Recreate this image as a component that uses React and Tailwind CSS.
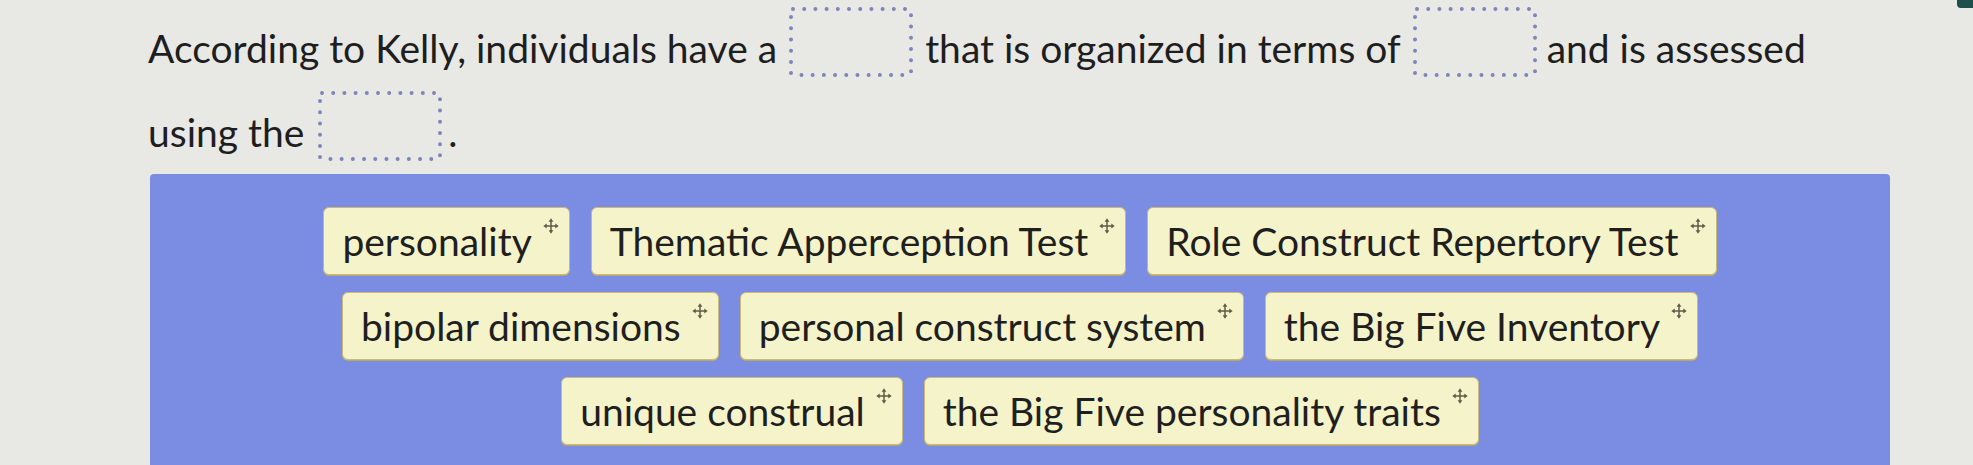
import React from 'react';

const rows = [
  ['personality', 'Thematic Apperception Test', 'Role Construct Repertory Test'],
  ['bipolar dimensions', 'personal construct system', 'the Big Five Inventory'],
  ['unique construal', 'the Big Five personality traits'],
];

function MoveIcon() {
  return (
    <svg width="16" height="16" viewBox="0 0 14 14" className="ml-[11px] mt-[10px] shrink-0">
      <g stroke="#5f5c48" strokeWidth="1.3" fill="none">
        <path d="M7 2v10M2 7h10" />
      </g>
      <g fill="#5f5c48">
        <path d="M7 0.3 4.9 3.2h4.2z" />
        <path d="M7 13.7 4.9 10.8h4.2z" />
        <path d="M0.3 7 3.2 4.9v4.2z" />
        <path d="M13.7 7 10.8 4.9v4.2z" />
      </g>
    </svg>
  );
}

function Blank({ className = '' }) {
  return (
    <span className={'relative inline-block h-[70px] w-[124px] align-[-14px] ' + className}>
      <svg width="124" height="70" className="absolute inset-0">
        <rect
          x="2"
          y="2"
          width="120"
          height="66"
          rx="2"
          fill="none"
          stroke="#7e85b9"
          strokeWidth="4"
          strokeLinecap="round"
          strokeDasharray="0 11.2"
        />
      </svg>
    </span>
  );
}

function Chip({ label }) {
  return (
    <div className="flex h-[68px] items-start rounded-[6px] border-[1.5px] border-[#cbb97c] bg-[#f5f3c9] pl-[18px] pr-[10px] shadow-[0_1px_0_#b7a868]">
      <span className="self-center text-[39px] leading-none text-[#1f1f1f]">{label}</span>
      <MoveIcon />
    </div>
  );
}

export default function App() {
  return (
    <div className="relative h-[465px] w-full overflow-hidden bg-[#e8e8e5] font-['Lato',sans-serif]">
      <div className="absolute right-0 top-0 h-[8px] w-[16px] rounded-bl-[4px] bg-[#1d4f4b]"></div>

      <div className="whitespace-nowrap pl-[148px] pt-[6px] text-[39px] leading-[84px] text-[#1e1e1e]">
        According to Kelly, individuals have a
        <Blank className="mx-[12px]" />
        that is organized in terms of
        <Blank className="ml-[12px] mr-[10px]" />
        and is assessed
        <br />
        using the
        <Blank className="ml-[14px] mr-[6px]" />.
      </div>

      <div className="ml-[150px] h-[300px] w-[1740px] rounded-[4px] bg-[#7b8ce3] pt-[33px]">
        <div className="flex flex-col gap-y-[17px]">
          {rows.map((row, i) => (
            <div key={i} className="flex justify-center gap-x-[21px]">
              {row.map((label) => (
                <Chip key={label} label={label} />
              ))}
            </div>
          ))}
        </div>
      </div>
    </div>
  );
}
